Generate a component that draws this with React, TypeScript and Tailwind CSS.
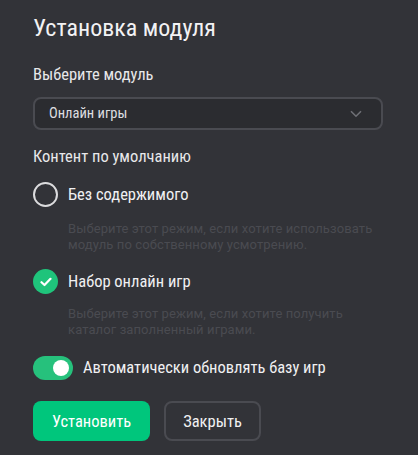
import React from "react";

export default function App() {
  return (
    <div
      className="w-[418px] h-[455px] bg-[#323338] text-[#ececee] pl-[33px] pr-[35px] pt-[13px] overflow-hidden"
      style={{ fontFamily: '"Roboto Condensed", Roboto, "Noto Sans", sans-serif' }}
    >
      <h1 className="text-[24px] leading-[30px] font-normal text-[#f2f2f4]">Установка модуля</h1>

      <div className="mt-[22px] text-[16.5px] leading-[20px] text-[#e8e8ea]">Выберите модуль</div>

      <div className="mt-[12px] h-[33px] w-[350px] rounded-[8px] border-2 border-[#4a4b51] bg-[#2b2c30] flex items-center justify-between pl-[14px] pr-[19px]">
        <span className="text-[14.5px] text-[#dedee0]">Онлайн игры</span>
        <svg width="12" height="8" viewBox="0 0 12 8" fill="none">
          <path d="M1 1.2L6 6.2L11 1.2" stroke="#6f7076" strokeWidth="1.6" />
        </svg>
      </div>

      <div className="mt-[17px] text-[16.5px] leading-[20px] text-[#e8e8ea]">Контент по умолчанию</div>

      <div className="mt-[15px] flex items-center gap-[10px]">
        <div className="w-[25px] h-[25px] rounded-full border-2 border-[#dcdcde] shrink-0" />
        <span className="text-[16.5px] leading-[20px] text-[#f0f0f2]">Без содержимого</span>
      </div>
      <div
        className="mt-[14px] ml-[35px] text-[13px] leading-[16px] tracking-[0.1px] text-[#4a4b51] w-[320px]"
        style={{ fontFamily: 'Roboto, "Noto Sans", sans-serif' }}
      >
        Выберите этот режим, если хотите использовать модуль по собственному усмотрению.
      </div>

      <div className="mt-[16px] flex items-center gap-[10px]">
        <div className="w-[25px] h-[25px] rounded-full bg-[#1fc47b] flex items-center justify-center shrink-0">
          <svg width="12" height="10" viewBox="0 0 12 10" fill="none">
            <path d="M1.5 5.2L4.5 8L10.5 1.8" stroke="#ffffff" strokeWidth="2.2" strokeLinecap="round" strokeLinejoin="round" />
          </svg>
        </div>
        <span className="text-[16.5px] leading-[20px] text-[#f0f0f2]">Набор онлайн игр</span>
      </div>
      <div
        className="mt-[12px] ml-[35px] text-[13px] leading-[16px] tracking-[0.1px] text-[#4a4b51] w-[320px]"
        style={{ fontFamily: 'Roboto, "Noto Sans", sans-serif' }}
      >
        Выберите этот режим, если хотите получить каталог заполненный играми.
      </div>

      <div className="mt-[18px] flex items-center gap-[10px]">
        <div className="w-[40px] h-[24px] rounded-full bg-[#26c17c] flex items-center justify-end pr-[4px] shrink-0">
          <div className="w-[16px] h-[16px] rounded-full bg-white" />
        </div>
        <span className="text-[16.5px] leading-[20px] text-[#f0f0f2]">Автоматически обновлять базу игр</span>
      </div>

      <div className="mt-[21px] flex gap-[14px]">
        <button className="w-[117px] h-[40px] pt-[2px] rounded-[8px] bg-[#00c67c] text-white text-[16.5px]">Установить</button>
        <button className="w-[97px] h-[40px] pt-[2px] rounded-[8px] border-2 border-[#4a4b51] text-[#f0f0f2] text-[16.5px]">Закрыть</button>
      </div>
    </div>
  );
}
